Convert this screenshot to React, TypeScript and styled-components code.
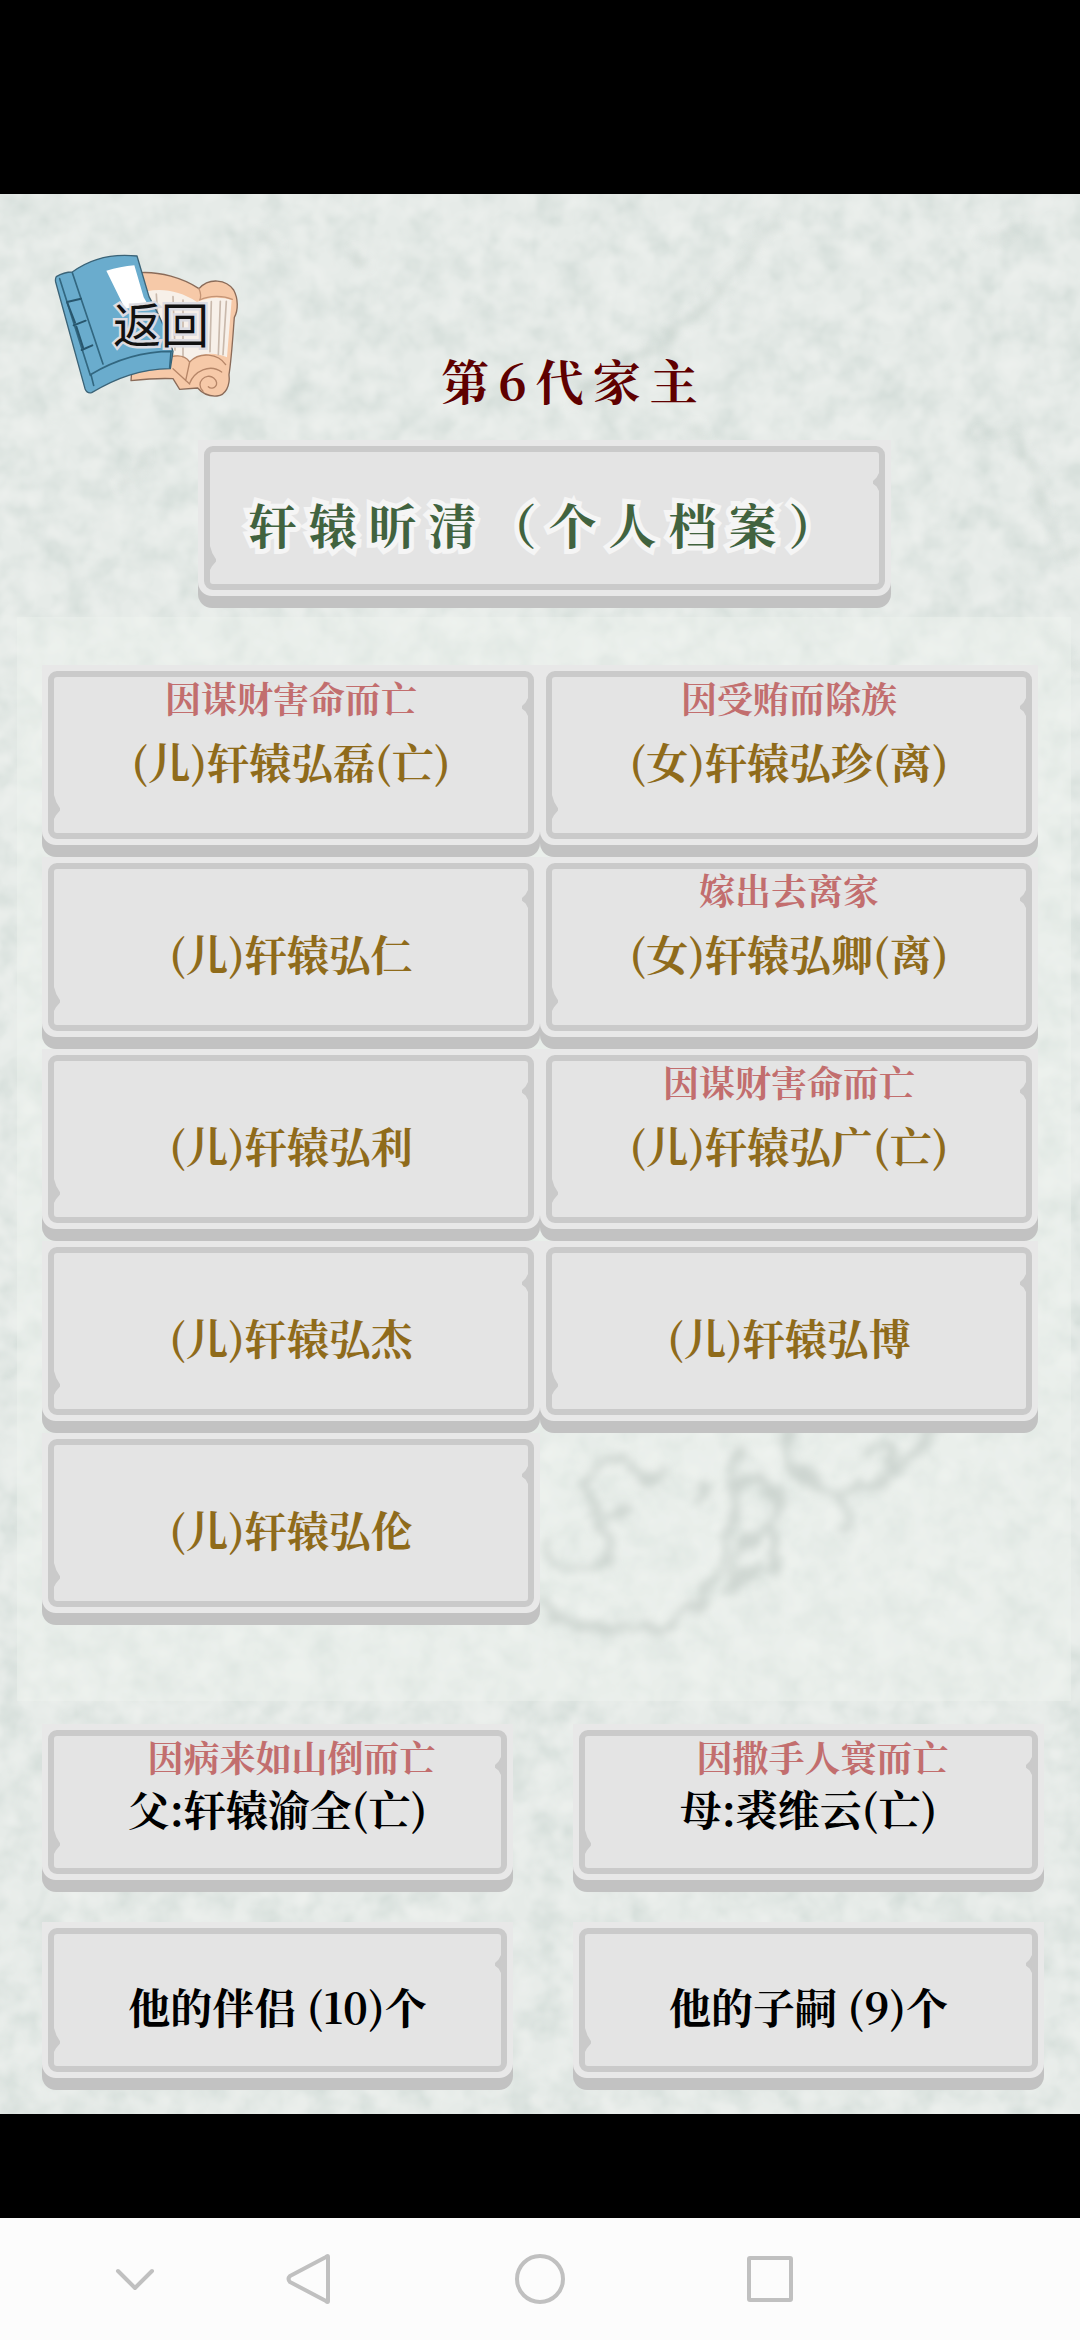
import styled, { createGlobalStyle } from "styled-components";

const GlobalStyle = createGlobalStyle`
  *, *::before, *::after {
    box-sizing: border-box;
  }

  body {
    margin: 0;
    background: #000;
    font-family: "Noto Serif CJK SC", "Source Han Serif SC", "Liberation Serif", "Noto Sans CJK SC", serif;
  }

  button {
    margin: 0;
    padding: 0;
    border: 0;
    background: none;
    font: inherit;
    color: inherit;
    cursor: pointer;
  }

  h1, p {
    margin: 0;
  }
`;

const Screen = styled.div`
  min-height: 100vh;
  display: flex;
  flex-direction: column;
  padding-top: 194px;
  background: #000;
`;

const Paper = styled.main`
  position: relative;
  isolation: isolate;
  display: flex;
  flex-direction: column;
  padding: 58px 0 24px;
  background: #e6ebe8;
`;

const PaperTexture = styled.svg`
  position: absolute;
  inset: 0;
  z-index: -1;
  width: 100%;
  height: 100%;
`;

const Header = styled.header`
  display: flex;
  flex-direction: column;
  padding: 0 53px;
`;

const BackButton = styled.button`
  align-self: flex-start;
  display: grid;
  place-items: center;
  width: 188px;
  height: 148px;
`;

const BookArt = styled.svg`
  grid-area: 1 / 1;
  width: 100%;
  height: 100%;
`;

const BackLabel = styled.span`
  grid-area: 1 / 1;
  padding: 0 0 8px 28px;
  font-family: "Noto Sans CJK SC", sans-serif;
  font-size: 48px;
  line-height: 48px;
  font-weight: 400;
  color: #111;
  -webkit-text-stroke: 5px #dcdce2;
  paint-order: stroke fill;
`;

const Title = styled.h1`
  align-self: center;
  margin-top: -52px;
  padding-left: 68px;
  font-size: 48px;
  line-height: 64px;
  font-weight: 700;
  letter-spacing: 9px;
  color: #5f0000;
`;

const Tile = styled.button<{ $tall?: boolean }>`
  display: flex;
  width: 100%;
  height: ${(props) => (props.$tall ? 192 : 168)}px;
  padding-bottom: 12px;
  border-radius: 0 0 14px 14px;
  background: linear-gradient(transparent 50%, #c2c2c2 50%);
`;

const TileRim = styled.span`
  flex: 1;
  display: flex;
  padding: 6px;
  border-radius: 0 0 14px 14px;
  background: #e8e8e8;
`;

const TileFace = styled.span`
  position: relative;
  flex: 1;
  display: grid;
  justify-items: center;
  border: 6px solid #cacaca;
  border-radius: 9px;
  background: #e4e4e4;

  &::before,
  &::after {
    content: "";
    position: absolute;
    background: #cacaca;
  }

  &::before {
    top: 21px;
    right: 0;
    width: 6px;
    height: 18px;
    clip-path: polygon(100% 0, 60% 25%, 0 45%, 0 60%, 60% 75%, 100% 100%);
  }

  &::after {
    bottom: 14px;
    left: 0;
    width: 6px;
    height: 24px;
    clip-path: polygon(0 0, 40% 30%, 100% 55%, 100% 65%, 30% 85%, 0 100%);
  }
`;

const Note = styled.span<{ $shift?: boolean }>`
  grid-area: 1 / 1;
  align-self: start;
  padding-left: ${(props) => (props.$shift ? 28 : 0)}px;
  font-size: 36px;
  line-height: 42px;
  font-weight: 700;
  color: #c26e6e;
`;

const Name = styled.span<{ $tone: "gold" | "ink" }>`
  grid-area: 1 / 1;
  align-self: center;
  padding-top: 12px;
  font-size: 42px;
  line-height: 48px;
  font-weight: 700;
  color: ${(props) => (props.$tone === "gold" ? "#8f6b1b" : "#000")};
`;

const HeadName = styled(Name)`
  padding-left: 8px;
  font-size: 48px;
  letter-spacing: 12px;
  color: #41633f;
  -webkit-text-stroke: 10px #f5f5f5;
  paint-order: stroke fill;
`;

const HeadSlot = styled.div`
  display: flex;
  margin: 28px 189px 9px 198px;
`;

const ChildPanel = styled.section`
  margin: 0 9px 0 17px;
  padding: 48px 33px 76px 25px;
  background: rgba(240, 245, 241, 0.4);
`;

const ChildGrid = styled.div`
  display: grid;
  grid-template-columns: 1fr 1fr;
`;

const FamilyGrid = styled.section`
  display: grid;
  grid-template-columns: 1fr 1fr;
  gap: 30px 60px;
  padding: 23px 36px 0 42px;
`;

const SystemBar = styled.nav`
  display: grid;
  grid-template-columns: 118fr 230fr 231fr 230fr;
  align-items: center;
  justify-items: center;
  height: 122px;
  margin-top: auto;
  padding: 0 18% 0 7%;
  background: #fcfcfc;
`;

const NavButton = styled.button`
  display: flex;

  svg {
    width: 56px;
    height: 56px;
    fill: none;
    stroke: #c0c0c0;
    stroke-width: 4;
    stroke-linecap: round;
    stroke-linejoin: round;
  }
`;

type Child = { name: string; note?: string };

const children: Child[] = [
  { name: "(儿)轩辕弘磊(亡)", note: "因谋财害命而亡" },
  { name: "(女)轩辕弘珍(离)", note: "因受贿而除族" },
  { name: "(儿)轩辕弘仁" },
  { name: "(女)轩辕弘卿(离)", note: "嫁出去离家" },
  { name: "(儿)轩辕弘利" },
  { name: "(儿)轩辕弘广(亡)", note: "因谋财害命而亡" },
  { name: "(儿)轩辕弘杰" },
  { name: "(儿)轩辕弘博" },
  { name: "(儿)轩辕弘伦" },
];

const family: Child[] = [
  { name: "父:轩辕渝全(亡)", note: "因病来如山倒而亡" },
  { name: "母:裘维云(亡)", note: "因撒手人寰而亡" },
  { name: "他的伴侣 (10)个" },
  { name: "他的子嗣 (9)个" },
];

function Texture() {
  return (
    <PaperTexture aria-hidden="true">
      <defs>
        <filter id="mottle" x="0" y="0" width="100%" height="100%" colorInterpolationFilters="sRGB">
          <feTurbulence type="fractalNoise" baseFrequency="0.032" numOctaves="3" seed="8" />
          <feColorMatrix values="0 0 0 0 0.77  0 0 0 0 0.82  0 0 0 0 0.8  1 0 0 0 -0.36" />
        </filter>
        <filter id="fleck" x="0" y="0" width="100%" height="100%" colorInterpolationFilters="sRGB">
          <feTurbulence type="fractalNoise" baseFrequency="0.045" numOctaves="2" seed="21" />
          <feColorMatrix values="0 0 0 0 0.94  0 0 0 0 0.95  0 0 0 0 0.94  0 1.4 0 0 -0.54" />
        </filter>
        <filter id="soft" x="-10%" y="-10%" width="120%" height="120%">
          <feTurbulence type="fractalNoise" baseFrequency="0.04" numOctaves="2" seed="3" />
          <feDisplacementMap in="SourceGraphic" scale="26" xChannelSelector="R" yChannelSelector="G" />
          <feGaussianBlur stdDeviation="4" />
        </filter>
      </defs>
      <rect width="100%" height="100%" filter="url(#mottle)" />
      <rect width="100%" height="100%" filter="url(#fleck)" />
      <g filter="url(#soft)" fill="none" stroke="#a3aea9" strokeWidth="9" opacity="0.65" strokeLinecap="round">
        <path d="M542 1412c14 22 60 26 100 22 30-2 46-12 56-24 20-24 24-56 34-70 10-40-10-60 10-82" />
        <path d="M592 1316v-38c12-22 34-18 40-4 10 16 24 10 26-2M600 1322q16 4 24-6" />
        <path d="M545 1350c10 24 48 30 62 14 14-14 8-30-10-32" />
        <path d="M734 1324c-10-30 20-50 34-34s12 46-14 52M698 1288q14 12 0 20" />
        <path d="M788 1240c2 30 16 50 40 56 30 4 80-10 104-62M870 1258q30-20 20 20" />
        <path d="M838 1300c12 14 18 30 2 34M732 1380q14-40 34-42 20 16 6 38M724 1396l36-24" />
      </g>
      <g filter="url(#soft)" fill="none" stroke="#becac4" strokeWidth="5" opacity="0.6">
        <path d="M570 210c60-40 110-70 150-110s30-50 60-70M690 230c30 30 60 60 80 80" />
        <path d="M975 230c40 24 54 10 64 60s20 60 41 68M980 40q20 4 40-10M1046 440q20 30 34 34" />
        <path d="M262 36q8 14 16 18M352 56q6 12 14 14M120 290q20-24 26-28" />
      </g>
    </PaperTexture>
  );
}

function Book() {
  return (
    <BookArt viewBox="70 66 564 444" aria-hidden="true" strokeLinejoin="round" strokeLinecap="round">
      <path d="M330 128c60-4 130 16 178 48 30-34 82-28 104 4 14 26 14 60 2 82-4 50-8 120-16 172 4 32-10 62-36 64-24 2-44-8-58-24l-54 4-20-32c-40-2-90 2-126 6z" fill="#f6c9a8" stroke="#8a6b59" strokeWidth="4" />
      <path d="M352 184c50-10 100 0 150 32 30-14 66-18 104-6l-14 172c-40-18-80-14-112 14-20-18-40-24-66-22z" fill="#f7f0e9" />
      <path d="M380 192l10 170M430 200l6 160M460 210v170M545 215l-4 150M572 214l-6 160M590 214l-10 160" fill="none" stroke="#c9b9ac" strokeWidth="5" />
      <path d="M508 176c6 14 6 26 2 34 30-14 70-14 98-2" fill="none" stroke="#c59576" strokeWidth="4" />
      <path d="M426 380c26-6 44 2 54 16 30-32 86-26 108 8M480 396l-12 56M480 460c14-36 60-60 96-34M520 484c-26-26 10-58 32-40s-2 40-16 26M430 416l50 46" fill="none" stroke="#b68668" strokeWidth="4" />
      <path d="M80 140c16-10 30-14 48-14 54-40 120-56 194-48l36 122q50 90 72 164l-8 52c-90 2-158 26-236 72-8 2-16-2-20-12l-88-320q-2-10 2-16z" fill="#6aaccd" stroke="#3b6377" strokeWidth="4" />
      <path d="M90 146l92 290M128 128l92 274M182 434c70-42 150-70 244-70M192 466l-8-32M424 366l-4 48" fill="none" stroke="#326780" strokeWidth="5" />
      <path d="M112 216l42-10M132 286l36-14M156 360l32-14M112 216l24 62M140 290l20 62" fill="none" stroke="#28566d" strokeWidth="6" />
      <path d="M230 122c28-8 56-14 84-16l28 96 14 24-70 10z" fill="#fff" />
    </BookArt>
  );
}

function FamilyTile({ person, tone, tall }: { person: Child; tone: "gold" | "ink"; tall?: boolean }) {
  return (
    <Tile type="button" $tall={tall}>
      <TileRim>
        <TileFace>
          {person.note && <Note $shift={!tall}>{person.note}</Note>}
          <Name $tone={tone}>{person.name}</Name>
        </TileFace>
      </TileRim>
    </Tile>
  );
}

export default function App() {
  return (
    <>
      <GlobalStyle />
      <Screen>
        <Paper>
          <Texture />
          <Header>
            <BackButton type="button">
              <Book />
              <BackLabel>返回</BackLabel>
            </BackButton>
            <Title>第6代家主</Title>
          </Header>
          <HeadSlot>
            <Tile type="button">
              <TileRim>
                <TileFace>
                  <HeadName $tone="ink">轩辕昕清（个人档案）</HeadName>
                </TileFace>
              </TileRim>
            </Tile>
          </HeadSlot>
          <ChildPanel>
            <ChildGrid>
              {children.map((child) => (
                <FamilyTile key={child.name} person={child} tone="gold" tall />
              ))}
            </ChildGrid>
          </ChildPanel>
          <FamilyGrid>
            {family.map((person) => (
              <FamilyTile key={person.name} person={person} tone="ink" />
            ))}
          </FamilyGrid>
        </Paper>
        <SystemBar>
          <NavButton type="button" aria-label="收起">
            <svg viewBox="0 0 56 56">
              <path d="M11 20l17 17 17-17" />
            </svg>
          </NavButton>
          <NavButton type="button" aria-label="后退">
            <svg viewBox="0 0 56 56">
              <path d="M47 6v44q0 2-2 0L9 31q-3-3 0-6L45 6q2-2 2 0z" />
            </svg>
          </NavButton>
          <NavButton type="button" aria-label="主页">
            <svg viewBox="0 0 56 56">
              <circle cx="28" cy="28" r="23" />
            </svg>
          </NavButton>
          <NavButton type="button" aria-label="最近任务">
            <svg viewBox="0 0 56 56">
              <rect x="7" y="7" width="42" height="42" rx="1" />
            </svg>
          </NavButton>
        </SystemBar>
      </Screen>
    </>
  );
}
